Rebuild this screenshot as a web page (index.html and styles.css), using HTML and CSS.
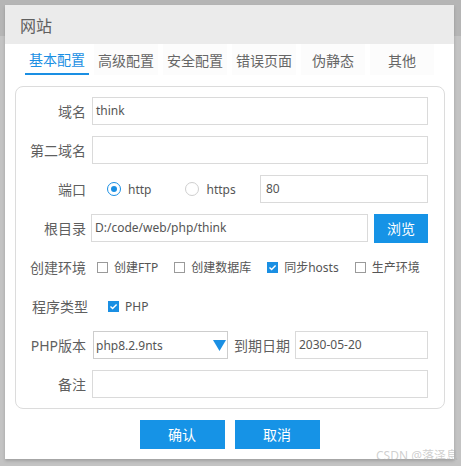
FILE: index.html
```html
<!DOCTYPE html>
<html lang="zh">
<head>
<meta charset="utf-8">
<title>网站</title>
<link rel="stylesheet" href="styles.css">
</head>
<body>
<div class="dialog">
  <div class="titlebar">网站</div>
  <div class="tabs">
    <div class="tab active">基本配置</div>
    <div class="tab">高级配置</div>
    <div class="tab">安全配置</div>
    <div class="tab">错误页面</div>
    <div class="tab">伪静态</div>
    <div class="tab">其他</div>
  </div>
  <div class="panel">
    <div class="row">
      <div class="label">域名</div>
      <div class="input grow">think</div>
    </div>
    <div class="row">
      <div class="label">第二域名</div>
      <div class="input grow"></div>
    </div>
    <div class="row">
      <div class="label">端口</div>
      <div class="radios">
        <span class="radio on"></span><span class="opt">http</span>
        <span class="radio second"></span><span class="opt">https</span>
      </div>
      <div class="input port">80</div>
    </div>
    <div class="row">
      <div class="label">根目录</div>
      <div class="input grow root">D:/code/web/php/think</div>
      <div class="btn browse">浏览</div>
    </div>
    <div class="row">
      <div class="label">创建环境</div>
      <div class="checks">
        <span class="check-item"><span class="cb"></span><span class="cbtext">创建FTP</span></span>
        <span class="check-item"><span class="cb"></span><span class="cbtext">创建数据库</span></span>
        <span class="check-item"><span class="cb on"><svg viewBox="0 0 11 11" width="11" height="11"><path d="M2.5 5.6 L4.6 7.6 L8.6 3.4" fill="none" stroke="#fff" stroke-width="1.4"/></svg></span><span class="cbtext">同步hosts</span></span>
        <span class="check-item"><span class="cb"></span><span class="cbtext">生产环境</span></span>
      </div>
    </div>
    <div class="row">
      <div class="label shift">程序类型</div>
      <div class="checks php">
        <span class="check-item"><span class="cb on"><svg viewBox="0 0 11 11" width="11" height="11"><path d="M2.5 5.6 L4.6 7.6 L8.6 3.4" fill="none" stroke="#fff" stroke-width="1.4"/></svg></span><span class="cbtext">PHP</span></span>
      </div>
    </div>
    <div class="row">
      <div class="label">PHP版本</div>
      <div class="select">
        <span>php8.2.9nts</span>
        <svg class="arrow" viewBox="0 0 13 11" width="13" height="11"><polygon points="0,0 13,0 6.5,11" fill="#1a8fe3"/></svg>
      </div>
      <div class="label2">到期日期</div>
      <div class="input grow">2030-05-20</div>
    </div>
    <div class="row">
      <div class="label">备注</div>
      <div class="input grow"></div>
    </div>
  </div>
  <div class="actions">
    <div class="btn action">确认</div>
    <div class="btn action">取消</div>
  </div>
</div>
<div class="watermark">CSDN @落泽息</div>
</body>
</html>
```
FILE: styles.css
```css
html, body {
  margin: 0;
  padding: 0;
}
body {
  width: 461px;
  height: 466px;
  overflow: hidden;
  position: relative;
  background: linear-gradient(to bottom, #b5b5b5 0, #b5b5b5 36px, #c3c3c3 36px, #c3c3c3 100%);
  font-family: "Noto Sans", "Noto Sans CJK SC", sans-serif;
  color: #5a5a5a;
}
.dialog {
  position: relative;
  margin: 5px 0 0 5px;
  width: 449px;
  height: 454px;
  background: #fff;
  box-shadow: 0 2px 3px rgba(0,0,0,0.18);
}
.titlebar {
  height: 39px;
  background: #ebebeb;
  padding-left: 15px;
  font-size: 16px;
  line-height: 43px;
  color: #5f5f5f;
}
.tabs {
  display: flex;
  gap: 5px;
  padding-left: 20px;
  height: 31px;
}
.tab {
  width: 64px;
  box-sizing: border-box;
  text-align: center;
  font-size: 14px;
  line-height: 33px;
  color: #666;
  background: #fcfcfc;
}
.tab.active {
  color: #1a8fe3;
  background: #fff;
  border-bottom: 2px solid #1a8fe3;
  line-height: 31px;
}
.panel {
  margin: 11px 0 0 10px;
  width: 430px;
  box-sizing: border-box;
  border: 1px solid #dcdcdc;
  border-radius: 8px;
  padding: 10px 16px 10px 0;
  display: flex;
  flex-direction: column;
  gap: 11px;
}
.row {
  display: flex;
  align-items: center;
  height: 28px;
}
.label {
  width: 70px;
  text-align: right;
  margin-right: 6px;
  font-size: 14px;
  color: #5f5f5f;
  flex: none;
}
.label.shift {
  margin-left: 2px;
  margin-right: 4px;
}
.input {
  height: 28px;
  box-sizing: border-box;
  border: 1px solid #dadada;
  font-size: 12px;
  line-height: 26px;
  padding-left: 3px;
  color: #555;
}
.grow {
  flex: 1;
}
.root {
  margin-left: -1px;
}
.radios {
  display: flex;
  align-items: center;
  width: 168px;
  flex: none;
}
.radio {
  width: 14px;
  height: 14px;
  box-sizing: border-box;
  border-radius: 50%;
  border: 1px solid #cfcfcf;
  margin-left: 15px;
  margin-right: 7px;
  position: relative;
}
.radio.on {
  border-color: #1a8fe3;
}
.radio.on::after {
  content: "";
  position: absolute;
  left: 3px;
  top: 3px;
  width: 6px;
  height: 6px;
  border-radius: 50%;
  background: #1a8fe3;
}
.radio.second {
  margin-left: 34px;
}
.opt {
  font-size: 12px;
  color: #555;
}
.port {
  flex: 1;
  padding-left: 5px;
}
.btn {
  background: #1693e6;
  color: #fff;
  font-size: 14px;
  text-align: center;
}
.browse {
  width: 54px;
  height: 29px;
  line-height: 29px;
  margin-left: 6px;
  flex: none;
}
.checks {
  display: flex;
  align-items: center;
  padding-left: 5px;
  gap: 16px;
}
.checks.php {
  padding-left: 16px;
}
.check-item {
  display: flex;
  align-items: center;
  gap: 6px;
}
.cb {
  width: 11px;
  height: 11px;
  box-sizing: border-box;
  border: 1px solid #9a9a9a;
  display: block;
}
.cb.on {
  border: none;
  background: #1a8fe3;
}
.cb svg {
  display: block;
}
.cbtext {
  font-size: 12px;
  color: #555;
}
.select {
  width: 135px;
  height: 28px;
  box-sizing: border-box;
  border: 1px solid #cdcdcd;
  display: flex;
  align-items: center;
  justify-content: space-between;
  padding: 0 1px 0 2px;
  margin-left: 1px;
  font-size: 12px;
  color: #555;
  flex: none;
}
.arrow {
  display: block;
}
.label2 {
  font-size: 14px;
  color: #5f5f5f;
  margin: 0 5px 0 6px;
  flex: none;
}
.actions {
  display: flex;
  justify-content: center;
  gap: 10px;
  margin-top: 11px;
}
.action {
  width: 85px;
  height: 29px;
  line-height: 29px;
}
.watermark {
  position: absolute;
  right: 3px;
  top: 446px;
  font-size: 12px;
  color: rgba(175,175,175,0.6);
  white-space: nowrap;
}
```
